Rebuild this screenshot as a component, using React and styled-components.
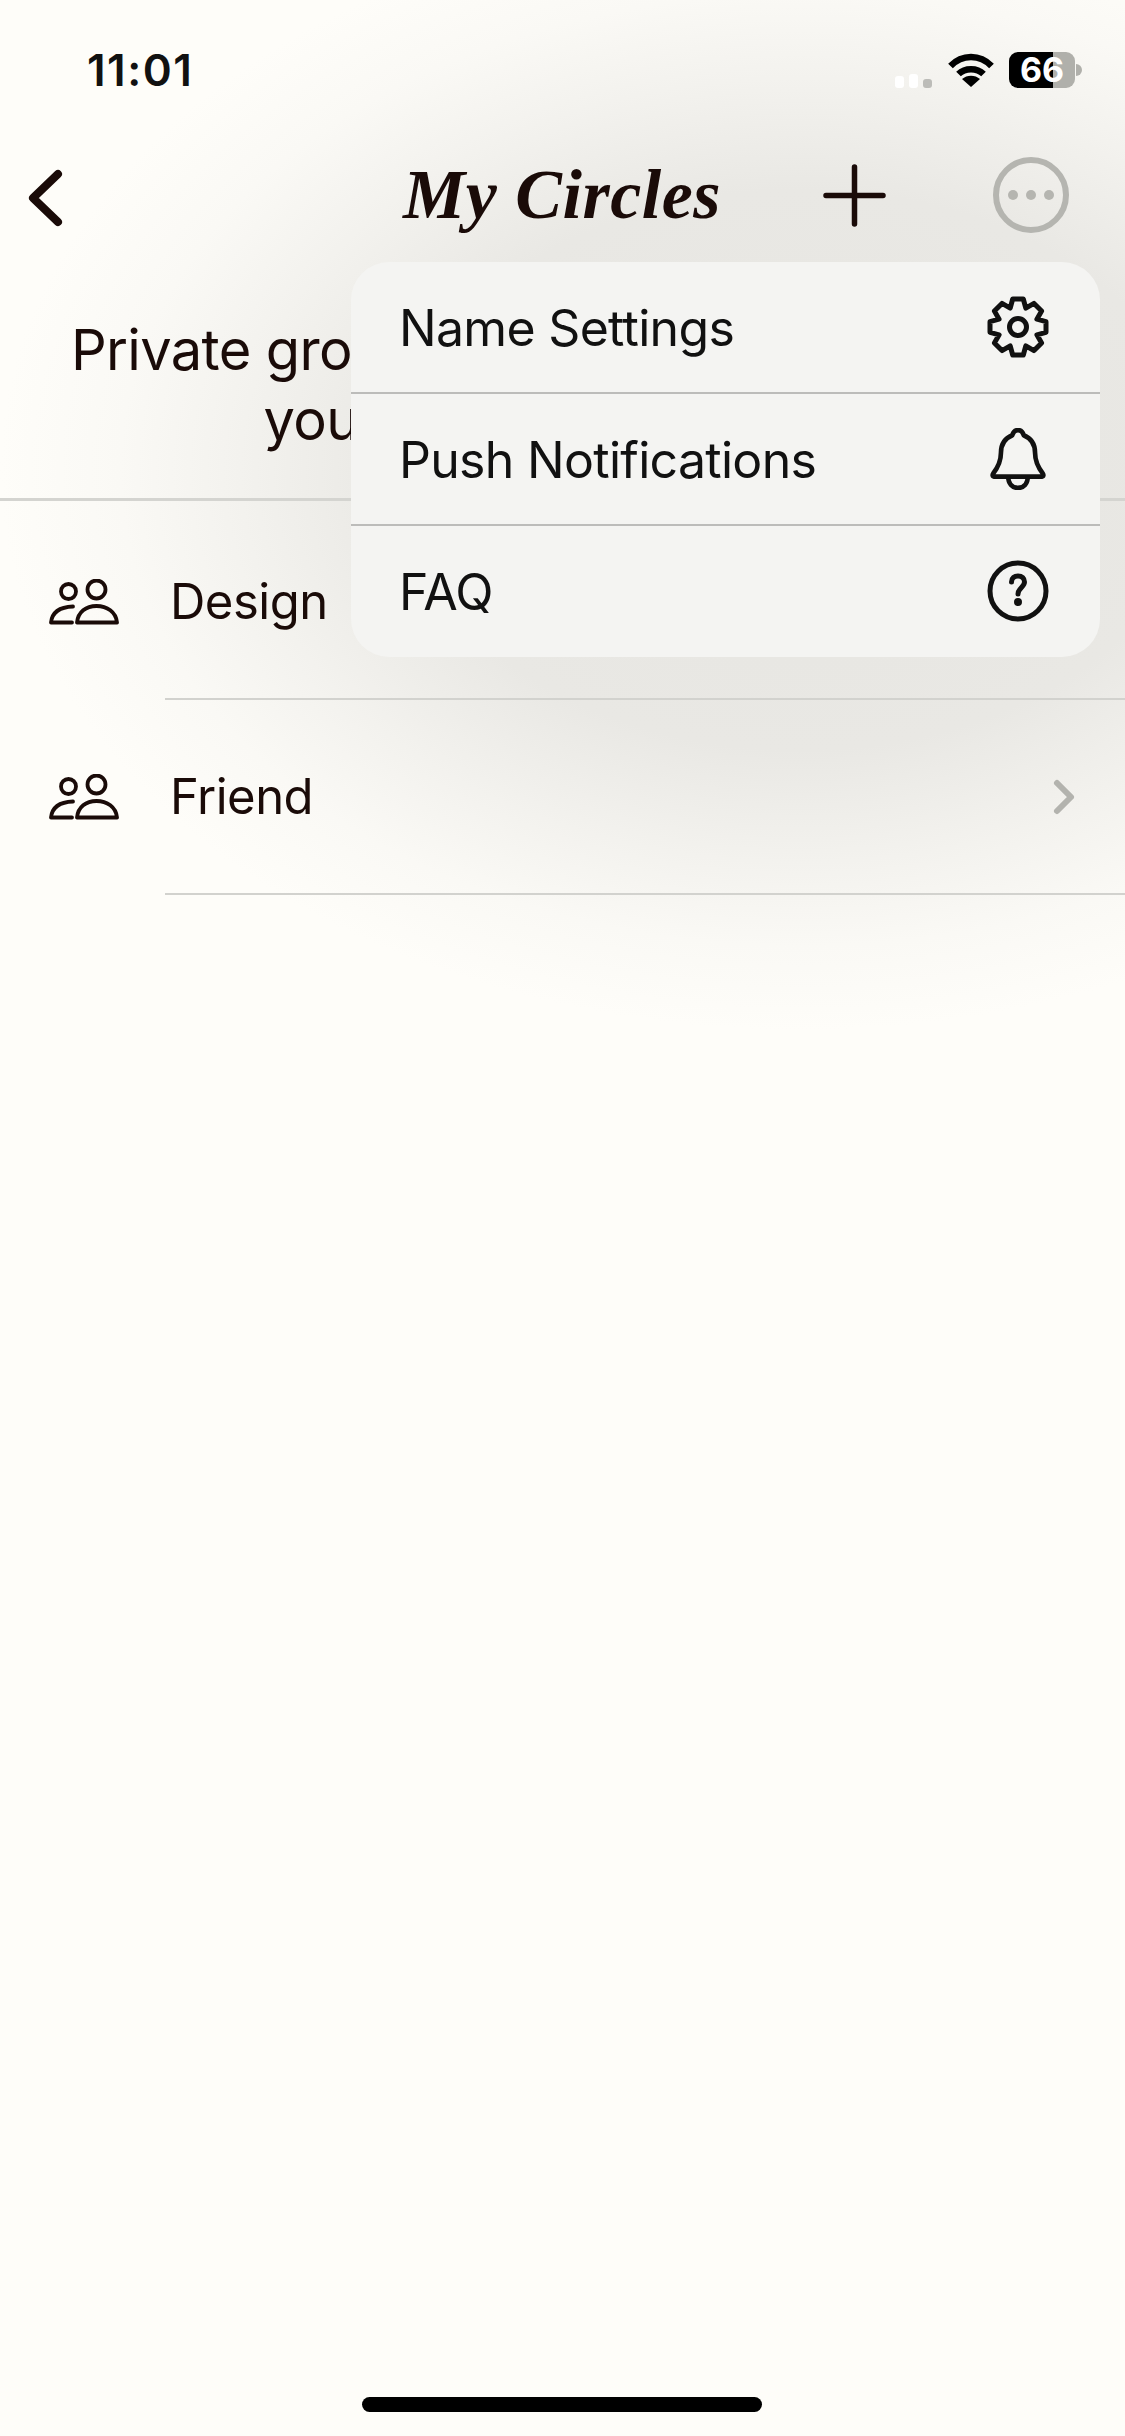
import React from "react";
import styled, { createGlobalStyle } from "styled-components";

const GlobalStyle = createGlobalStyle`
  html, body {
    margin: 0;
    padding: 0;
    background: #fefdf9;
  }
  * {
    box-sizing: border-box;
  }
`;

// the soft shade behind the open menu is part of the page background
const Page = styled.div`
  position: relative;
  width: 1125px;
  height: 2436px;
  overflow: hidden;
  background: radial-gradient(
    ellipse 800px 560px at 800px 470px,
    #e6e5e1 0%,
    #e9e8e4 50%,
    #f3f2ee 70%,
    #faf9f5 85%,
    #fefdf9 100%
  );
  background-color: #fefdf9;
  color: #1a0b08;
  font-family: Inter, "Liberation Sans", sans-serif;
`;

const StatusBar = styled.div`
  display: flex;
  align-items: center;
  justify-content: space-between;
  height: 139px;
  padding: 0 50px 0 87px;
`;

const Clock = styled.div`
  font-size: 44px;
  font-weight: 600;
  letter-spacing: 1.5px;
  color: #111;
`;

const StatusIcons = styled.div`
  display: flex;
  align-items: center;
`;

const Signal = styled.div`
  display: flex;
  align-items: flex-end;
  gap: 5px;
  height: 36px;
  margin-right: 16px;
`;

const SignalBar = styled.span`
  width: 9px;
  height: ${(p) => p.$h}px;
  border-radius: 3px;
  background: ${(p) => p.$color};
`;

const Battery = styled.div`
  position: relative;
  width: 66px;
  height: 36px;
  margin-left: 15px;
  border-radius: 9px;
  background: linear-gradient(90deg, #000 0 44px, #b0b0ab 44px);
  color: #fff;
  font-size: 34px;
  font-weight: 700;
  line-height: 36px;
  text-align: center;
  &::after {
    content: "";
    position: absolute;
    left: 67px;
    top: 12px;
    width: 6px;
    height: 12px;
    border-radius: 0 6px 6px 0;
    background: #b0b0ab;
  }
`;

const Nav = styled.div`
  display: flex;
  align-items: center;
  height: 112px;
  padding-left: 27px;
`;

const BackIcon = styled.svg`
  margin-top: 5px;
`;

const Title = styled.h1`
  width: 314px;
  margin: 0 0 0 340px;
  font-family: "Liberation Serif", serif;
  font-size: 70px;
  font-style: italic;
  font-weight: 700;
  letter-spacing: 0.5px;
  white-space: nowrap;
`;

const PlusIcon = styled.svg`
  margin-left: 106px;
`;

const MoreIcon = styled.svg`
  margin-left: 107px;
`;

const Subtitle = styled.p`
  height: 250px;
  margin: 0;
  padding-top: 64px;
  border-bottom: 3px solid #d4d4d0;
  font-size: 56px;
  letter-spacing: -0.65px;
  line-height: 70px;
  text-align: center;
`;

const List = styled.div`
  padding-top: 4px;
`;

const Row = styled.div`
  display: flex;
  align-items: center;
  height: 193px;
  padding: 0 49px;
`;

const RowLabel = styled.div`
  flex: 1;
  display: flex;
  align-items: center;
  justify-content: space-between;
`;

const RowName = styled.span`
  margin-left: 51px;
  font-size: 49px;
  letter-spacing: -0.5px;
`;

const RowRule = styled.div`
  height: 2px;
  margin-left: 165px;
  background: #d2d2ce;
`;

const Menu = styled.div`
  position: absolute;
  top: 262px;
  left: 351px;
  width: 749px;
  height: 395px;
  border-radius: 38px;
  background: #f4f4f2;
  color: #111;
`;

const MenuItem = styled.div`
  display: flex;
  align-items: center;
  justify-content: space-between;
  height: 132px;
  padding: 0 51px 0 48px;
  border-bottom: 2px solid ${(p) => (p.$last ? "transparent" : "#bcbcba")};
  font-size: 50px;
  letter-spacing: -0.7px;
`;

const MenuText = styled.span`
  padding-top: 1px;
`;

const MenuIcon = styled.svg`
  flex: none;
`;

const HomeBar = styled.div`
  position: absolute;
  left: 362px;
  top: 2397px;
  width: 400px;
  height: 15px;
  border-radius: 8px;
  background: #000;
`;

// eight toothed gear outline, worked out once
const gearPath = (() => {
  const cx = 31;
  const cy = 31;
  const pts = [];
  for (let i = 0; i < 8; i++) {
    const a = (i * Math.PI) / 4 - Math.PI / 2;
    const step = Math.PI / 4;
    [
      [-0.5, 20.5],
      [-0.24, 28.5],
      [0.24, 28.5],
      [0.5, 20.5],
    ].forEach(([o, r]) => {
      const t = a + o * step;
      pts.push(`${(cx + r * Math.cos(t)).toFixed(1)} ${(cy + r * Math.sin(t)).toFixed(1)}`);
    });
  }
  return `M${pts.join("L")}Z`;
})();

const GroupIcon = () => (
  <svg width="70" height="46" viewBox="0 0 70 46" fill="none" stroke="#1a0b08" strokeWidth="3.8" strokeLinecap="round" strokeLinejoin="round">
    <circle cx="47.5" cy="10.5" r="9" />
    <path d="M28 43.5C29 33 37 27 47.5 27C58 27 67 33 68 43.5Z" />
    <circle cx="19.5" cy="12.5" r="7.5" />
    <path d="M23 43.5H2C3 34 10 28 24 27.5" />
  </svg>
);

const Chevron = () => (
  <svg width="24" height="38" viewBox="0 0 24 38" fill="none" stroke="#b3b3ae" strokeWidth="6" strokeLinecap="round" strokeLinejoin="round">
    <path d="M5 5L19 19L5 33" />
  </svg>
);

const App = () => {
  return (
    <Page>
      <GlobalStyle />
      <StatusBar>
        <Clock>11:01</Clock>
        <StatusIcons>
          <Signal>
            <SignalBar $h={12} $color="#fff" />
            <SignalBar $h={14} $color="#fff" />
            <SignalBar $h={9} $color="#bcbcb8" />
          </Signal>
          <svg width="46" height="34" viewBox="0 0 46 34" fill="none" stroke="#000" strokeWidth="6.5">
            <path d="M2.5 13C14 1 32 1 43.5 13" />
            <path d="M10.5 21C17 14.5 29 14.5 35.5 21" />
            <path d="M23 34L14 26C19 21.5 27 21.5 32 26Z" fill="#000" stroke="none" />
          </svg>
          <Battery>66</Battery>
        </StatusIcons>
      </StatusBar>
      <Nav>
        <BackIcon width="36" height="58" viewBox="0 0 36 58" fill="none" stroke="#1a0b08" strokeWidth="8" strokeLinecap="round" strokeLinejoin="round">
          <path d="M31 5L6 29L31 53" />
        </BackIcon>
        <Title>My Circles</Title>
        <PlusIcon width="63" height="63" viewBox="0 0 63 63" fill="none" stroke="#1a0b08" strokeWidth="5.5" strokeLinecap="round">
          <path d="M31.5 3V60M3 31.5H60" />
        </PlusIcon>
        <MoreIcon width="76" height="76" viewBox="0 0 76 76" fill="#b5b5b0">
          <circle cx="38" cy="38" r="35" fill="none" stroke="#b5b5b0" strokeWidth="6" />
          <circle cx="20" cy="38" r="5" />
          <circle cx="38" cy="38" r="5" />
          <circle cx="56" cy="38" r="5" />
        </MoreIcon>
      </Nav>
      <Subtitle>
        Private groups you make are visible to
        <br />
        you and anyone invited
      </Subtitle>
      <List>
        <Row>
          <GroupIcon />
          <RowLabel>
            <RowName>Design</RowName>
            <Chevron />
          </RowLabel>
        </Row>
        <RowRule />
        <Row>
          <GroupIcon />
          <RowLabel>
            <RowName>Friend</RowName>
            <Chevron />
          </RowLabel>
        </Row>
        <RowRule />
      </List>
      <Menu>
        <MenuItem>
          <MenuText>Name Settings</MenuText>
          <MenuIcon width="62" height="62" viewBox="0 0 62 62" fill="none" stroke="#111" strokeWidth="5" strokeLinejoin="round">
            <path d={gearPath} />
            <circle cx="31" cy="31" r="8.5" />
          </MenuIcon>
        </MenuItem>
        <MenuItem>
          <MenuText>Push Notifications</MenuText>
          <MenuIcon width="62" height="62" viewBox="0 0 55 60" fill="none" stroke="#111" strokeWidth="4.5" strokeLinejoin="round">
            <path d="M4 47H51C52 47 52.5 45.5 51.5 44C46 37 44 32 44 24C44 14 38 9 33 7C32 3.5 30 2 27.5 2C25 2 23 3.5 22 7C17 9 11 14 11 24C11 32 9 37 3.5 44C2.5 45.5 3 47 4 47Z" />
            <path d="M18 47C18 54 22 58 27.5 58C33 58 37 54 37 47" />
          </MenuIcon>
        </MenuItem>
        <MenuItem $last>
          <MenuText>FAQ</MenuText>
          <MenuIcon width="62" height="62" viewBox="0 0 62 62" fill="none" stroke="#111" strokeWidth="5" strokeLinecap="round">
            <circle cx="31" cy="31" r="28" />
            <path d="M24.5 22C24.5 18 27.5 16 31 16C35 16 37.5 18.5 37.5 22C37.5 27 31 28 31 34" />
            <circle cx="31" cy="42" r="1.5" fill="#111" />
          </MenuIcon>
        </MenuItem>
      </Menu>
      <HomeBar />
    </Page>
  );
};

export default App;
